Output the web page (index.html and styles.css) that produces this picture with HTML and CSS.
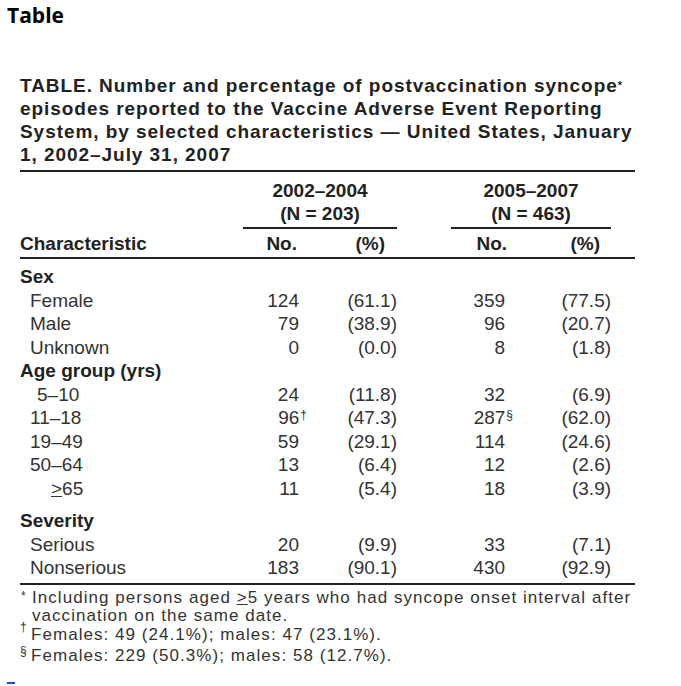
FILE: index.html
```html
<!DOCTYPE html>
<html lang="en">
<head>
    <meta charset="UTF-8">
    <meta name="viewport" content="width=device-width, initial-scale=1.0">
    <title>Table</title>
    <link rel="stylesheet" href="styles.css">
</head>
<body>
    <h1 class="page-title">Table</h1>
    <div class="figure">
        <p class="caption">TABLE. Number and percentage of postvaccination syncope<sup>*</sup><br>episodes reported to the Vaccine Adverse Event Reporting<br>System, by selected characteristics &mdash; United States, January<br>1, 2002&ndash;July 31, 2007</p>
        <table class="data">
            <colgroup>
                <col class="col-char">
                <col class="col-no">
                <col class="col-pct">
                <col class="col-gap">
                <col class="col-no2">
                <col class="col-pct2">
                <col class="col-end">
            </colgroup>
            <thead>
                <tr class="group-row">
                    <th></th>
                    <th colspan="2" class="group">2002&ndash;2004<br>(N = 203)</th>
                    <th></th>
                    <th colspan="2" class="group">2005&ndash;2007<br>(N = 463)</th>
                    <th></th>
                </tr>
                <tr class="head-row">
                    <th class="label">Characteristic</th>
                    <th class="h-no">No.</th>
                    <th class="h-pct">(%)</th>
                    <th></th>
                    <th class="h-no2">No.</th>
                    <th class="h-pct2">(%)</th>
                    <th></th>
                </tr>
            </thead>
            <tbody>
                <tr class="section first">
                    <td colspan="7">Sex</td>
                </tr>
                <tr>
                    <td class="sub">Female</td>
                    <td class="no">124</td><td class="pct">(61.1)</td><td></td>
                    <td class="no2">359</td><td class="pct">(77.5)</td><td></td>
                </tr>
                <tr>
                    <td class="sub">Male</td>
                    <td class="no">79</td><td class="pct">(38.9)</td><td></td>
                    <td class="no2">96</td><td class="pct">(20.7)</td><td></td>
                </tr>
                <tr>
                    <td class="sub">Unknown</td>
                    <td class="no">0</td><td class="pct">(0.0)</td><td></td>
                    <td class="no2">8</td><td class="pct">(1.8)</td><td></td>
                </tr>
                <tr class="section">
                    <td colspan="7">Age group (yrs)</td>
                </tr>
                <tr>
                    <td class="sub sub-2">5&ndash;10</td>
                    <td class="no">24</td><td class="pct">(11.8)</td><td></td>
                    <td class="no2">32</td><td class="pct">(6.9)</td><td></td>
                </tr>
                <tr>
                    <td class="sub">11&ndash;18</td>
                    <td class="no">96<sup class="ref">&dagger;</sup></td><td class="pct">(47.3)</td><td></td>
                    <td class="no2">287<sup class="ref">&sect;</sup></td><td class="pct">(62.0)</td><td></td>
                </tr>
                <tr>
                    <td class="sub">19&ndash;49</td>
                    <td class="no">59</td><td class="pct">(29.1)</td><td></td>
                    <td class="no2">114</td><td class="pct">(24.6)</td><td></td>
                </tr>
                <tr>
                    <td class="sub">50&ndash;64</td>
                    <td class="no">13</td><td class="pct">(6.4)</td><td></td>
                    <td class="no2">12</td><td class="pct">(2.6)</td><td></td>
                </tr>
                <tr>
                    <td class="sub sub-3"><u>&gt;</u>65</td>
                    <td class="no">11</td><td class="pct">(5.4)</td><td></td>
                    <td class="no2">18</td><td class="pct">(3.9)</td><td></td>
                </tr>
                <tr class="section spaced">
                    <td colspan="7">Severity</td>
                </tr>
                <tr>
                    <td class="sub">Serious</td>
                    <td class="no">20</td><td class="pct">(9.9)</td><td></td>
                    <td class="no2">33</td><td class="pct">(7.1)</td><td></td>
                </tr>
                <tr class="last">
                    <td class="sub">Nonserious</td>
                    <td class="no">183</td><td class="pct">(90.1)</td><td></td>
                    <td class="no2">430</td><td class="pct">(92.9)</td><td></td>
                </tr>
            </tbody>
        </table>
        <div class="notes">
            <div class="note">
                <span class="mark mark-star">*</span>
                <span class="note-text">Including persons aged <u>&gt;</u>5 years who had syncope onset interval after<br>vaccination on the same date.</span>
            </div>
            <div class="note">
                <span class="mark mark-dagger">&dagger;</span>
                <span class="note-text">Females: 49 (24.1%); males: 47 (23.1%).</span>
            </div>
            <div class="note note-last">
                <span class="mark mark-sect">&sect;</span>
                <span class="note-text">Females: 229 (50.3%); males: 58 (12.7%).</span>
            </div>
        </div>
    </div>
    <a class="top-link" href="#"></a>
</body>
</html>
```

FILE: styles.css
```css
body {
    margin: 0;
    font-family: "Liberation Sans", Arial, sans-serif;
    color: #333;
    background-color: #fff;
}

.page-title {
    font-family: "Open Sans", sans-serif;
    font-weight: 700;
    font-size: 21px;
    line-height: 28px;
    margin: 1px 0 0 7px;
    color: #000;
}

.figure {
    width: 615px;
    margin-left: 20px;
}

.caption {
    margin: 45px 0 0;
    padding-bottom: 4px;
    border-bottom: 2px solid #222;
    font-weight: 700;
    font-size: 19px;
    line-height: 23px;
    letter-spacing: 0.95px;
    color: #222;
    white-space: nowrap;
}

.caption sup {
    font-size: 11px;
    line-height: 0;
    vertical-align: 3px;
    letter-spacing: 0;
}

/* table */
.data {
    width: 615px;
    table-layout: fixed;
    border-collapse: separate;
    border-spacing: 0;
    font-size: 19px;
    line-height: 23.5px;
}

.col-char { width: 223px; }
.col-no { width: 57px; }
.col-pct { width: 97px; }
.col-gap { width: 54px; }
.col-no2 { width: 56px; }
.col-pct2 { width: 104px; }
.col-end { width: 24px; }

.data th,
.data td {
    padding: 0;
    white-space: nowrap;
}

.data th {
    font-weight: 700;
    color: #222;
    line-height: 23px;
}

.group-row th {
    padding-top: 7px;
}

.group-row th.group {
    text-align: center;
    padding-bottom: 2px;
    border-bottom: 2px solid #222;
}

.head-row th {
    padding-top: 3px;
    padding-bottom: 2px;
    border-bottom: 2px solid #222;
}

.head-row .label { text-align: left; }
.head-row .h-no { text-align: right; padding-right: 3px; }
.head-row .h-pct { text-align: right; padding-right: 12px; }
.head-row .h-no2 { text-align: right; padding-right: 0; }
.head-row .h-pct2 { text-align: right; padding-right: 11px; }

.section td {
    font-weight: 700;
    color: #222;
}

.section.first td { padding-top: 6px; }
.section.spaced td { padding-top: 9px; }

.sub { padding-left: 10px !important; }
.sub-2 { padding-left: 17px !important; }
.sub-3 { padding-left: 31px !important; }

.no { text-align: right; padding-right: 1px !important; }
.no2 { text-align: right; padding-right: 2px !important; }
.pct { text-align: right; }

.ref {
    font-size: 12px;
    line-height: 0;
    vertical-align: 5px;
    margin-right: -8px;
    padding-left: 1px;
}

.last td {
    padding-bottom: 3px;
    border-bottom: 2px solid #222;
}

/* footnotes */
.notes {
    margin-top: 4px;
    font-size: 17px;
    line-height: 18.5px;
    letter-spacing: 1.05px;
    color: #333;
}

.note {
    display: flex;
    align-items: flex-start;
    white-space: nowrap;
}

.note-last { margin-top: 3px; }

.mark {
    flex: none;
    width: 11px;
    font-size: 12px;
    line-height: 12px;
    letter-spacing: 0;
}

.mark-star { margin-top: 1px; padding-left: 1px; }
.mark-dagger { margin-top: -5px; }
.mark-sect { margin-top: -2px; }

.top-link {
    display: block;
    width: 8px;
    height: 2px;
    margin: 16px 0 0 7px;
    background-color: #1f4fd8;
}
```
